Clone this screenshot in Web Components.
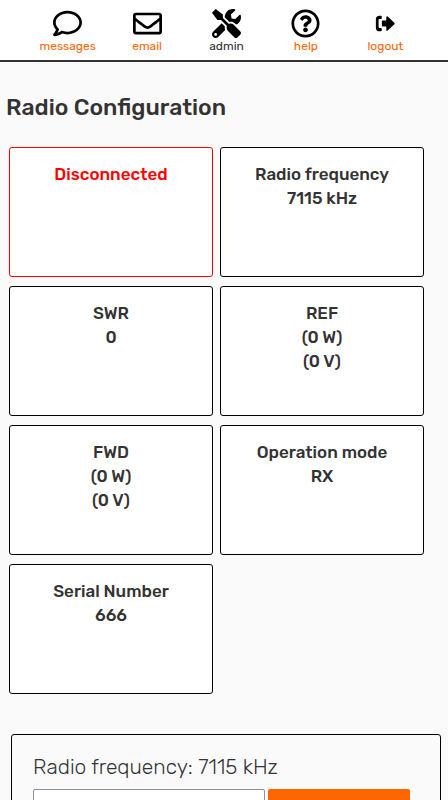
<!DOCTYPE html>
<html lang="en">
<head>
<meta charset="utf-8">
<meta name="viewport" content="width=device-width, initial-scale=1">
<title>Radio Configuration</title>
<style>
body { margin: 0; background: #fafafa; color: #333; font-family: Rubik, Roboto, "Liberation Sans", sans-serif; }
</style>
</head>
<body>
<radio-page></radio-page>
<script>
const define = (name, html) => customElements.define(name, class extends HTMLElement {
  constructor() {
    super();
    const t = document.createElement('template');
    t.innerHTML = html;
    this.attachShadow({ mode: 'open' }).append(t.content.cloneNode(true));
  }
});

const icons = {
  messages: 'M256 32C114.6 32 0 125.1 0 240c0 47.6 19.9 91.2 52.9 126.3C38 405.7 7 439.1 6.5 439.5c-6.6 7-8.4 17.2-4.6 26S14.4 480 24 480c61.5 0 110-25.7 139.1-46.3C192 442.8 223.2 448 256 448c141.4 0 256-93.1 256-208S397.4 32 256 32zm0 368c-26.7 0-53.1-4.1-78.4-12.1l-22.7-7.2-19.5 13.8c-14.3 10.1-33.9 21.4-57.5 29 7.3-12.1 14.4-25.7 19.9-40.2l10.6-28.1-20.6-21.8C69.7 314.1 48 282.2 48 240c0-88.2 93.3-160 208-160s208 71.8 208 160-93.3 160-208 160z',
  email: 'M464 64H48C21.49 64 0 85.49 0 112v288c0 26.51 21.49 48 48 48h416c26.51 0 48-21.49 48-48V112c0-26.51-21.49-48-48-48zm0 48v40.805c-22.422 18.259-58.168 46.651-134.587 106.49-16.841 13.247-50.201 45.072-73.413 44.701-23.208.375-56.579-31.459-73.413-44.701C106.18 199.465 70.425 171.067 48 152.805V112h416zM48 400V214.398c22.914 18.251 55.409 43.862 104.938 82.646 21.857 17.205 60.134 55.186 103.062 54.955 42.717.231 80.509-37.199 103.053-54.947 49.528-38.783 82.032-64.401 104.947-82.653V400H48z',
  admin: 'M501.1 395.7L384 278.6c-23.1-23.1-57.6-27.6-85.4-13.9L192 158.1V96L64 0 0 64l96 128h62.1l106.6 106.6c-13.6 27.8-9.2 62.3 13.9 85.4l117.1 117.1c14.6 14.6 38.2 14.6 52.7 0l52.7-52.7c14.5-14.6 14.5-38.2 0-52.7zM331.7 225c28.3 0 54.9 11 74.9 31l19.4 19.4c15.8-6.9 30.8-16.5 43.8-29.5 37.1-37.1 49.7-89.3 37.9-136.7-2.2-9-13.5-12.1-20.1-5.5l-74.4 74.4-67.9-11.3L334 98.9l74.4-74.4c6.6-6.6 3.4-17.9-5.7-20.2-47.4-11.7-99.6.9-136.6 37.9-28.5 28.5-41.9 66.1-41.2 103.6l82.1 82.1c8.1-1.9 16.5-2.9 24.7-2.9zm-103.9 82l-56.7-56.7L18.7 402.8c-25 25-25 65.5 0 90.5s65.5 25 90.5 0l123.6-123.6c-7.6-19.9-9.9-41.6-5-62.7zM64 472c-13.2 0-24-10.8-24-24 0-13.3 10.7-24 24-24s24 10.7 24 24c0 13.2-10.7 24-24 24z',
  help: 'M256 8C119.043 8 8 119.083 8 256c0 136.997 111.043 248 248 248s248-111.003 248-248C504 119.083 392.957 8 256 8zm0 448c-110.532 0-200-89.431-200-200 0-110.495 89.472-200 200-200 110.491 0 200 89.471 200 200 0 110.53-89.431 200-200 200zm107.244-255.2c0 67.052-72.421 68.084-72.421 92.863V300c0 6.627-5.373 12-12 12h-45.647c-6.627 0-12-5.373-12-12v-8.659c0-35.745 27.1-50.034 47.579-61.516 17.561-9.845 28.324-16.541 28.324-29.579 0-17.246-21.999-28.693-39.784-28.693-23.189 0-33.894 10.977-48.942 29.969-4.057 5.12-11.46 6.071-16.666 2.124l-27.824-21.098c-5.107-3.872-6.251-11.066-2.644-16.363C184.846 131.491 214.94 112 261.794 112c49.071 0 101.45 38.304 101.45 88.8zM298 368c0 23.159-18.841 42-42 42s-42-18.841-42-42 18.841-42 42-42 42 18.841 42 42z',
  logout: 'M190 132v32q0 14-14 14h-24q-18 0-18 18v120q0 18 18 18h24q14 0 14 14v32q0 14-14 14h-26q-64 0-64-64v-148q0-64 64-64h26q14 0 14 14zM296 133L412 244q12 12 0 24L296 379q-20 15-26-10v-60h-64q-14 0-14-14v-78q0-14 14-14h64v-60q6-25 26-10z'
};

customElements.define('nav-item', class extends HTMLElement {
  constructor() {
    super();
    const t = document.createElement('template');
    t.innerHTML = `
      <style>
        :host { display: block; flex: 1 1 0; min-width: 0; }
        a { display: flex; flex-direction: column; align-items: center; color: #ff6600; font-size: 12px; line-height: 16px; text-decoration: none; }
        :host([current]) a { color: #333; }
        svg { width: 29px; height: 29px; fill: #000; }
      </style>
      <a href="#"><svg viewBox="0 0 512 512" aria-hidden="true"><path/></svg><slot></slot></a>`;
    this.attachShadow({ mode: 'open' }).append(t.content.cloneNode(true));
  }
  connectedCallback() {
    this.shadowRoot.querySelector('path').setAttribute('d', icons[this.getAttribute('icon')]);
    if (this.hasAttribute('current')) this.shadowRoot.querySelector('a').setAttribute('aria-current', 'page');
  }
});

define('site-nav', `
  <style>
    :host { display: block; background: #fff; border-bottom: 2px solid #333; }
    nav { display: flex; padding: 9px 23px 6px 28px; }
  </style>
  <nav aria-label="Main"><slot></slot></nav>`);

define('status-tile', `
  <style>
    :host { display: block; box-sizing: border-box; min-height: 130px; padding: 14px 8px; border: 1px solid #000; border-radius: 3px; background: #fff; text-align: center; font-size: 17px; font-weight: 500; line-height: 24px; }
    :host([alert]) { border-color: #f00; color: #f00; }
  </style>
  <slot></slot>`);

define('status-grid', `
  <style>
    :host { display: grid; grid-template-columns: 1fr 1fr; gap: 9px 7px; padding: 0 24px 0 9px; }
  </style>
  <slot></slot>`);

define('frequency-form', `
  <style>
    :host { display: block; margin: 40px 7px 0 11px; padding: 20px 30px 20px 21px; border: 1px solid #000; border-radius: 3px; }
    label { display: block; font-size: 21px; font-weight: 300; line-height: 24px; margin-bottom: 10px; }
    .row { display: grid; grid-template-columns: 232fr 142fr; gap: 3px; }
    input { box-sizing: border-box; width: 100%; min-width: 0; height: 38px; border: 1px solid #8f8f9d; border-radius: 2px; background: #fff; font: inherit; padding: 0 8px; }
    button { height: 38px; border: 0; border-radius: 2px; background: #ff6600; color: #fff; font: inherit; }
  </style>
  <form>
    <label for="freq"><slot></slot></label>
    <div class="row"><input id="freq" type="text"><button type="button" aria-label="Change frequency"></button></div>
  </form>`);

define('radio-page', `
  <style>
    :host { display: block; }
    h1 { margin: 0; padding: 31px 6px 26px; font-size: 23px; font-weight: 500; line-height: 28px; }
  </style>
  <site-nav>
    <nav-item icon="messages">messages</nav-item>
    <nav-item icon="email">email</nav-item>
    <nav-item icon="admin" current>admin</nav-item>
    <nav-item icon="help">help</nav-item>
    <nav-item icon="logout">logout</nav-item>
  </site-nav>
  <main>
    <h1>Radio Configuration</h1>
    <status-grid>
      <status-tile alert><div>Disconnected</div></status-tile>
      <status-tile><div>Radio frequency</div><div>7115 kHz</div></status-tile>
      <status-tile><div>SWR</div><div>0</div></status-tile>
      <status-tile><div>REF</div><div>(0 W)</div><div>(0 V)</div></status-tile>
      <status-tile><div>FWD</div><div>(0 W)</div><div>(0 V)</div></status-tile>
      <status-tile><div>Operation mode</div><div>RX</div></status-tile>
      <status-tile><div>Serial Number</div><div>666</div></status-tile>
    </status-grid>
    <frequency-form>Radio frequency: 7115 kHz</frequency-form>
  </main>`);
</script>
</body>
</html>
